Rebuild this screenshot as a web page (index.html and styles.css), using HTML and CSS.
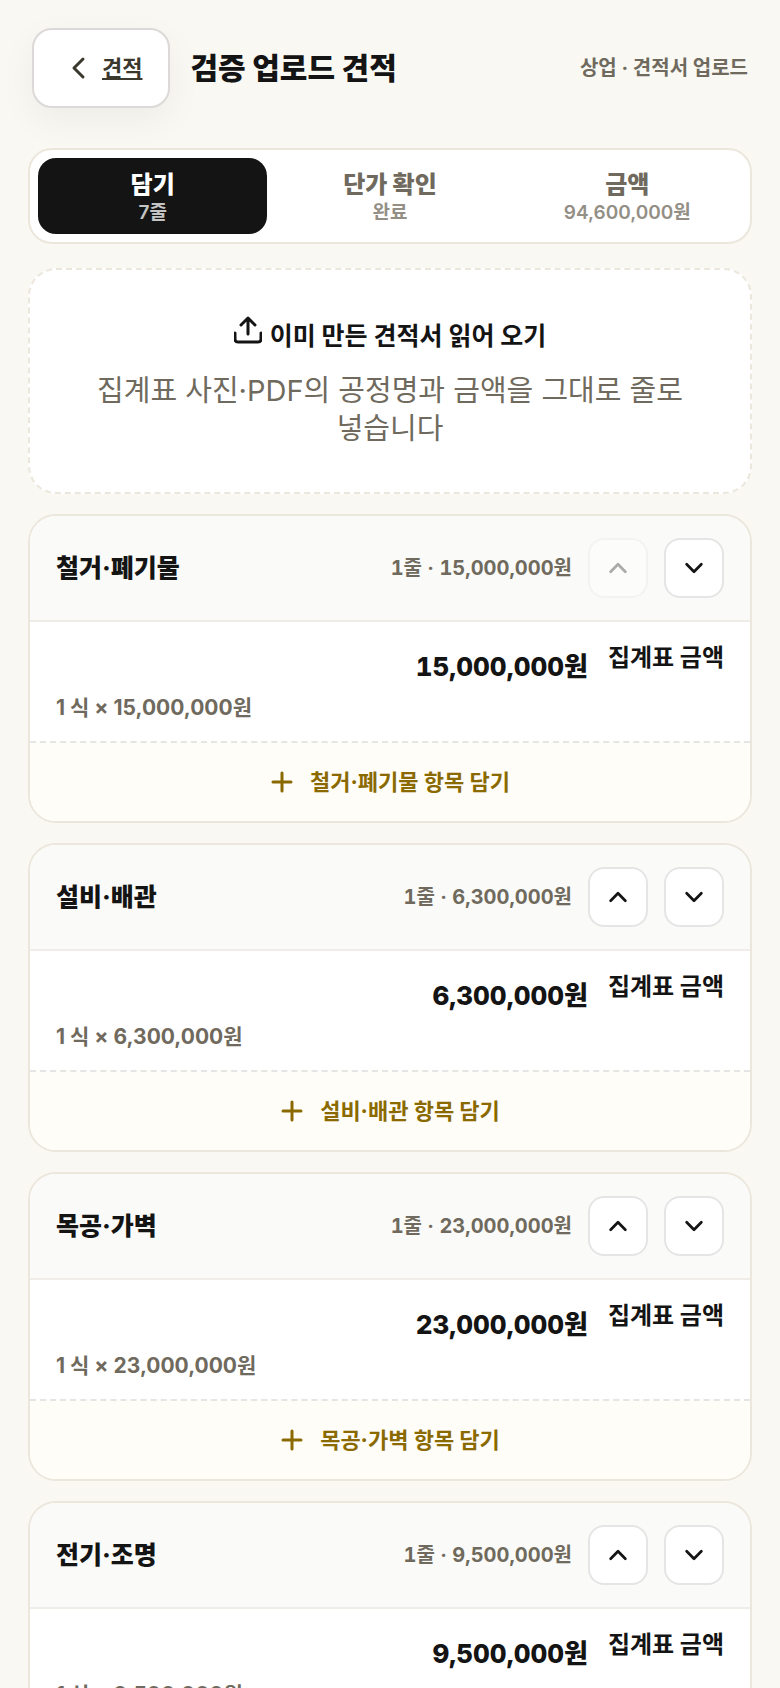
FILE: index.html
```html
<!DOCTYPE html>
<html lang="ko">
<head>
    <meta charset="UTF-8">
    <meta name="viewport" content="width=device-width, initial-scale=1.0">
    <title>검증 업로드 견적</title>
    <link rel="stylesheet" href="styles.css">
</head>
<body>
    <!-- Shared icons -->
    <svg class="icon-defs" aria-hidden="true">
        <symbol id="icon-up" viewBox="0 0 24 24"><path d="M4 16l8-8 8 8"/></symbol>
        <symbol id="icon-down" viewBox="0 0 24 24"><path d="M4 8l8 8 8-8"/></symbol>
        <symbol id="icon-plus" viewBox="0 0 24 24"><path d="M12 3v18M3 12h18"/></symbol>
    </svg>

    <!-- Top bar -->
    <header class="top-bar">
        <a href="#" class="back-button">
            <svg class="back-icon" viewBox="0 0 24 24" aria-hidden="true"><path d="M17 3l-9 9 9 9"/></svg>
            <span>견적</span>
        </a>
        <h1 class="title">검증 업로드 견적</h1>
        <span class="meta">상업 · 견적서 업로드</span>
    </header>

    <main class="content">
        <!-- Steps -->
        <nav class="steps">
            <button type="button" class="step active">
                <span class="step-name">담기</span>
                <span class="step-info">7줄</span>
            </button>
            <button type="button" class="step">
                <span class="step-name">단가 확인</span>
                <span class="step-info">완료</span>
            </button>
            <button type="button" class="step">
                <span class="step-name">금액</span>
                <span class="step-info">94,600,000원</span>
            </button>
        </nav>

        <!-- Upload area -->
        <button type="button" class="upload">
            <span class="upload-title">
                <svg class="upload-icon" viewBox="0 0 28 28" aria-hidden="true"><path d="M14 18V2M7 9l7-7 7 7M1 17v6q0 3 3 3h20q3 0 3-3v-6"/></svg>
                이미 만든 견적서 읽어 오기
            </span>
            <span class="upload-text">집계표 사진·PDF의 공정명과 금액을 그대로 줄로 넣습니다</span>
        </button>

        <!-- Work groups -->
        <section class="group">
            <div class="group-head">
                <h2 class="group-name">철거·폐기물</h2>
                <span class="group-total">1줄 · 15,000,000원</span>
                <button type="button" class="move" aria-label="위로" disabled><svg><use href="#icon-up"/></svg></button>
                <button type="button" class="move" aria-label="아래로"><svg><use href="#icon-down"/></svg></button>
            </div>
            <div class="line">
                <span class="line-amount">15,000,000원</span>
                <span class="line-name">집계표 금액</span>
                <span class="line-qty">1 식 × 15,000,000원</span>
            </div>
            <button type="button" class="add"><svg><use href="#icon-plus"/></svg>철거·폐기물 항목 담기</button>
        </section>

        <section class="group">
            <div class="group-head">
                <h2 class="group-name">설비·배관</h2>
                <span class="group-total">1줄 · 6,300,000원</span>
                <button type="button" class="move" aria-label="위로"><svg><use href="#icon-up"/></svg></button>
                <button type="button" class="move" aria-label="아래로"><svg><use href="#icon-down"/></svg></button>
            </div>
            <div class="line">
                <span class="line-amount">6,300,000원</span>
                <span class="line-name">집계표 금액</span>
                <span class="line-qty">1 식 × 6,300,000원</span>
            </div>
            <button type="button" class="add"><svg><use href="#icon-plus"/></svg>설비·배관 항목 담기</button>
        </section>

        <section class="group">
            <div class="group-head">
                <h2 class="group-name">목공·가벽</h2>
                <span class="group-total">1줄 · 23,000,000원</span>
                <button type="button" class="move" aria-label="위로"><svg><use href="#icon-up"/></svg></button>
                <button type="button" class="move" aria-label="아래로"><svg><use href="#icon-down"/></svg></button>
            </div>
            <div class="line">
                <span class="line-amount">23,000,000원</span>
                <span class="line-name">집계표 금액</span>
                <span class="line-qty">1 식 × 23,000,000원</span>
            </div>
            <button type="button" class="add"><svg><use href="#icon-plus"/></svg>목공·가벽 항목 담기</button>
        </section>

        <section class="group">
            <div class="group-head">
                <h2 class="group-name">전기·조명</h2>
                <span class="group-total">1줄 · 9,500,000원</span>
                <button type="button" class="move" aria-label="위로"><svg><use href="#icon-up"/></svg></button>
                <button type="button" class="move" aria-label="아래로"><svg><use href="#icon-down"/></svg></button>
            </div>
            <div class="line">
                <span class="line-amount">9,500,000원</span>
                <span class="line-name">집계표 금액</span>
                <span class="line-qty">1 식 × 9,500,000원</span>
            </div>
            <button type="button" class="add"><svg><use href="#icon-plus"/></svg>전기·조명 항목 담기</button>
        </section>
    </main>
</body>
</html>
```

FILE: styles.css
```css
/* Basic reset */
* {
    margin: 0;
    padding: 0;
    box-sizing: border-box;
}

body {
    background-color: #f9f8f3;
    color: #141414;
    font-family: Inter, "Noto Sans CJK KR", sans-serif;
    line-height: 32px;
    word-break: keep-all;
}

button {
    font-family: inherit;
    line-height: inherit;
    color: inherit;
    border: none;
    background: none;
    cursor: pointer;
}

svg {
    fill: none;
    stroke: currentColor;
    stroke-width: 3;
    stroke-linecap: round;
    stroke-linejoin: round;
    flex: none;
}

.icon-defs {
    display: none;
}

/* Top bar */
.top-bar {
    display: flex;
    align-items: center;
    gap: 20px;
    padding: 28px 32px 40px;
}

.back-button {
    display: flex;
    align-items: center;
    gap: 12px;
    height: 80px;
    padding: 0 26px 0 32px;
    border: 2px solid #dcd9d8;
    border-radius: 20px;
    background-color: #fff;
    box-shadow: 0 12px 36px rgba(20, 20, 20, 0.05);
    color: #3b382e;
    font-size: 22px;
    font-weight: 600;
}

.back-icon {
    width: 24px;
    height: 24px;
}

.title {
    font-size: 30px;
    font-weight: 800;
}

.meta {
    margin-left: auto;
    color: #6f6a5d;
    font-size: 20px;
    font-weight: 700;
}

.content {
    display: flex;
    flex-direction: column;
    gap: 20px;
    padding: 0 28px 40px;
}

/* Steps */
.steps {
    display: grid;
    grid-template-columns: repeat(3, 1fr);
    gap: 8px;
    margin-bottom: 4px;
    padding: 8px;
    border: 2px solid #ece7dc;
    border-radius: 24px;
    background-color: #fff;
}

.step {
    display: flex;
    flex-direction: column;
    align-items: center;
    padding: 12px 0 8px;
    border-radius: 18px;
    color: #6f6a5d;
}

.step.active {
    background-color: #141414;
    color: #fff;
}

.step-name {
    font-size: 24px;
    font-weight: 800;
    line-height: 30px;
}

.step-info {
    font-size: 19px;
    font-weight: 600;
    line-height: 26px;
    opacity: 0.75;
}

/* Upload area */
.upload {
    display: flex;
    flex-direction: column;
    align-items: center;
    gap: 16px;
    padding: 46px 40px 44px;
    border: 2px dashed #ece7dc;
    border-radius: 28px;
    background-color: #fff;
}

.upload-title {
    display: flex;
    align-items: flex-start;
    gap: 8px;
    font-size: 25px;
    font-weight: 700;
    line-height: 40px;
}

.upload-icon {
    width: 28px;
    height: 28px;
}

.upload-text {
    color: #6f6a5d;
    font-size: 29px;
    line-height: 38px;
}

/* Work group card */
.group {
    border: 2px solid #ece7dc;
    border-radius: 28px;
    background-color: #fff;
    overflow: hidden;
}

.group-head {
    display: flex;
    align-items: center;
    gap: 16px;
    padding: 22px 26px;
    border-bottom: 2px solid #f0ece7;
    background-color: #fafaf8;
}

.group-name {
    flex: 1;
    font-size: 25px;
    font-weight: 800;
}

.group-total {
    color: #6f6a5d;
    font-size: 20px;
    font-weight: 700;
    font-variant-numeric: tabular-nums;
}

.move {
    display: flex;
    align-items: center;
    justify-content: center;
    width: 60px;
    height: 60px;
    border: 2px solid #e5e5e5;
    border-radius: 16px;
    background-color: #fff;
}

.move:disabled {
    opacity: 0.35;
}

.move svg {
    width: 22px;
    height: 22px;
}

/* Line inside a group */
.line {
    display: grid;
    grid-template-columns: 1fr auto;
    column-gap: 20px;
    padding: 18px 26px 17px;
}

.line-amount {
    padding-top: 8px;
    font-size: 26px;
    font-weight: 800;
    line-height: 38px;
    text-align: right;
    font-variant-numeric: tabular-nums;
}

.line-name {
    font-size: 24px;
    font-weight: 700;
    line-height: 36px;
}

.line-qty {
    grid-column: 1 / -1;
    padding-top: 6px;
    color: #6f6a5d;
    font-size: 21px;
    font-weight: 700;
    line-height: 32px;
}

/* Add item button */
.add {
    display: flex;
    align-items: center;
    justify-content: center;
    gap: 16px;
    width: 100%;
    height: 80px;
    border-top: 2px dashed #e5e5e5;
    background-color: #fffdf8;
    color: #8a6a00;
    font-size: 22px;
    font-weight: 700;
}

.add svg {
    width: 24px;
    height: 24px;
}
```
